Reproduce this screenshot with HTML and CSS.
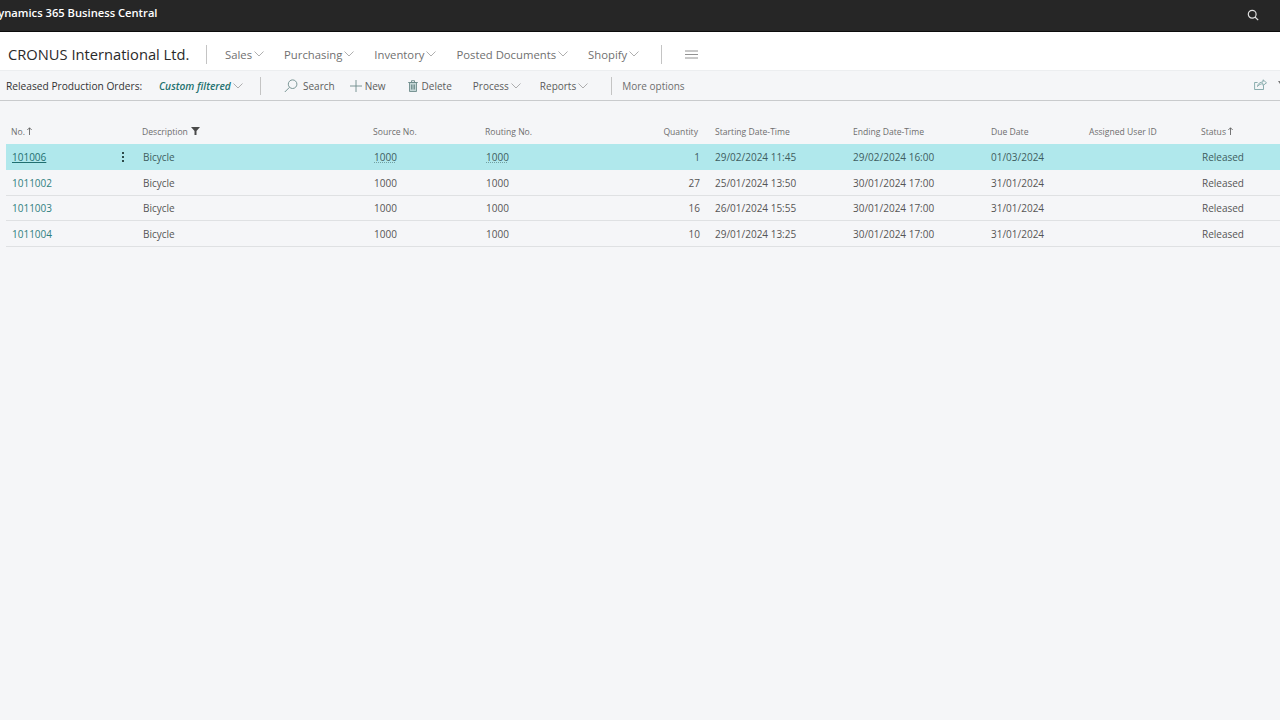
FILE: index.html
```html
<!DOCTYPE html>
<html lang="en">
<head>
<meta charset="utf-8">
<title>Released Production Orders</title>
<link rel="stylesheet" href="styles.css">
</head>
<body>
<header class="topbar">
  <span class="product">Dynamics 365 Business Central</span>
  <svg class="top-search" width="12" height="12" viewBox="0 0 12 12"><circle cx="5.2" cy="5.2" r="3.9"/><path d="M8 8l3.2 3.2"/></svg>
</header>
<nav class="navbar">
  <span class="company">CRONUS International Ltd.</span>
  <span class="sep nav-sep"></span>
  <div class="menu">
    <span class="menu-item">Sales<svg class="chev" viewBox="0 0 10 6"><path d="M.5.5L5 5 9.500.5"/></svg></span>
    <span class="menu-item">Purchasing<svg class="chev" viewBox="0 0 10 6"><path d="M.5.5L5 5 9.500.5"/></svg></span>
    <span class="menu-item">Inventory<svg class="chev" viewBox="0 0 10 6"><path d="M.5.5L5 5 9.500.5"/></svg></span>
    <span class="menu-item">Posted Documents<svg class="chev" viewBox="0 0 10 6"><path d="M.5.5L5 5 9.500.5"/></svg></span>
    <span class="menu-item">Shopify<svg class="chev" viewBox="0 0 10 6"><path d="M.5.5L5 5 9.500.5"/></svg></span>
  </div>
  <span class="sep nav-sep2"></span>
  <svg class="hamburger" width="13" height="9" viewBox="0 0 13 9"><path d="M0 1h13M0 4.500h13M0 8h13"/></svg>
</nav>
<div class="actionbar">
  <span class="page-name">Released Production Orders:</span>
  <span class="filter">Custom filtered<svg class="chev" viewBox="0 0 10 6"><path d="M.5.5L5 5 9.500.5"/></svg></span>
  <span class="sep act-sep"></span>
  <span class="act act-search"><svg class="ic" width="14" height="14" viewBox="0 0 14 14"><circle cx="8.600" cy="5.200" r="4.300"/><path d="M5.500 8.300L.8 13"/></svg>Search</span>
  <span class="act act-new"><svg class="ic ic-new" width="12" height="12" viewBox="0 0 12 12"><path d="M6 0v12M0 6h12"/></svg>New</span>
  <span class="act act-delete"><svg class="ic ic-del" width="10" height="12" viewBox="0 0 10 12"><path class="fill" d="M1.500 2.500h7v9h-7z"/><path d="M1.500 2.500h7v9h-7zM.2 2.500h9.600M3.500 2.500V.7h3v1.800M3.500 4.500v5M5 4.500v5M6.500 4.500v5"/></svg>Delete</span>
  <span class="act act-process">Process<svg class="chev" viewBox="0 0 10 6"><path d="M.5.5L5 5 9.500.5"/></svg></span>
  <span class="act act-reports">Reports<svg class="chev" viewBox="0 0 10 6"><path d="M.5.5L5 5 9.500.5"/></svg></span>
  <span class="sep act-sep2"></span>
  <span class="act more">More options</span>
  <svg class="share" width="13" height="11" viewBox="0 0 13 11"><path d="M9.500 6.500v4H.6V3.500h3M3.500 7.500C4 4.500 6 3 9 3V.8L12.500 3.800 9 6.500V4.700C7 4.700 5 5.500 3.500 7.500z"/></svg>
  <svg class="filter-pane" width="8" height="6" viewBox="0 0 8 6"><path d="M0 0h8L4 6z"/></svg>
</div>
<main class="list">
  <div class="row head">
    <div class="cell">No. <svg class="arrow" width="5" height="8" viewBox="0 0 5 8"><path d="M2.500 8V.8M.3 3L2.500.8 4.700 3"/></svg></div>
    <div class="cell">Description <svg class="funnel" width="9" height="8" viewBox="0 0 9 8"><path d="M0 0h9L5.500 4v4h-2V4z"/></svg></div>
    <div class="cell">Source No.</div>
    <div class="cell">Routing No.</div>
    <div class="cell num">Quantity</div>
    <div class="cell">Starting Date-Time</div>
    <div class="cell">Ending Date-Time</div>
    <div class="cell">Due Date</div>
    <div class="cell">Assigned User ID</div>
    <div class="cell">Status <svg class="arrow" width="5" height="8" viewBox="0 0 5 8"><path d="M2.500 8V.8M.3 3L2.500.8 4.700 3"/></svg></div>
  </div>
  <div class="row data selected">
    <div class="cell no"><a class="link current">101006</a><span class="dots"><i></i><i></i><i></i></span></div>
    <div class="cell">Bicycle</div>
    <div class="cell"><span class="lookup">1000</span></div>
    <div class="cell"><span class="lookup">1000</span></div>
    <div class="cell num">1</div>
    <div class="cell date">29/02/2024 11:45</div>
    <div class="cell date">29/02/2024 16:00</div>
    <div class="cell date">01/03/2024</div>
    <div class="cell"></div>
    <div class="cell">Released</div>
  </div>
  <div class="row data">
    <div class="cell no"><a class="link">1011002</a></div>
    <div class="cell">Bicycle</div>
    <div class="cell">1000</div>
    <div class="cell">1000</div>
    <div class="cell num">27</div>
    <div class="cell date">25/01/2024 13:50</div>
    <div class="cell date">30/01/2024 17:00</div>
    <div class="cell date">31/01/2024</div>
    <div class="cell"></div>
    <div class="cell">Released</div>
  </div>
  <div class="row data">
    <div class="cell no"><a class="link">1011003</a></div>
    <div class="cell">Bicycle</div>
    <div class="cell">1000</div>
    <div class="cell">1000</div>
    <div class="cell num">16</div>
    <div class="cell date">26/01/2024 15:55</div>
    <div class="cell date">30/01/2024 17:00</div>
    <div class="cell date">31/01/2024</div>
    <div class="cell"></div>
    <div class="cell">Released</div>
  </div>
  <div class="row data">
    <div class="cell no"><a class="link">1011004</a></div>
    <div class="cell">Bicycle</div>
    <div class="cell">1000</div>
    <div class="cell">1000</div>
    <div class="cell num">10</div>
    <div class="cell date">29/01/2024 13:25</div>
    <div class="cell date">30/01/2024 17:00</div>
    <div class="cell date">31/01/2024</div>
    <div class="cell"></div>
    <div class="cell">Released</div>
  </div>
</main>
</body>
</html>
```
FILE: styles.css
```css
* { box-sizing: border-box; }
html, body { margin: 0; height: 100%; }
body {
  width: 1280px;
  height: 720px;
  overflow: hidden;
  background: #f5f6f8;
  color: #555;
  font-family: "Open Sans", "Liberation Sans", sans-serif;
  font-size: 10px;
}
svg { fill: none; stroke: currentColor; flex: none; }

.topbar {
  height: 32px;
  background: #262626;
  border-bottom: 1px solid #0c0c0c;
  display: flex;
  align-items: center;
  justify-content: space-between;
  overflow: hidden;
  padding-right: 21px;
}
.product {
  margin-left: -10px;
  margin-top: -6px;
  color: #fff;
  font-size: 11.200px;
  font-weight: 600;
  white-space: nowrap;
}
.top-search { color: #e0e0e0; stroke-width: 1.200; margin-top: -2px; }

.navbar {
  height: 38px;
  background: #fff;
  display: flex;
  align-items: center;
  padding: 6px 0 0 8px;
}
.company { font-size: 14.700px; color: #2a2a2a; white-space: nowrap; width: 198px; }
.sep { width: 1px; height: 19px; background: #c4c4c4; flex: none; }
.menu { display: flex; margin-left: 18px; width: 436px; gap: 20px; }
.menu-item { font-size: 11.300px; color: #707070; display: flex; align-items: center; white-space: nowrap; }
.chev { width: 10px; height: 6px; margin-left: 2px; color: #9a9a9a; stroke-width: .8; }
.hamburger { color: #868686; margin-left: 23px; stroke-width: .9; }

.actionbar {
  height: 31px;
  border-top: 1px solid #eceef0;
  border-bottom: 1px solid #c9cbcd;
  display: flex;
  align-items: center;
  padding-left: 6px;
  position: relative;
  white-space: nowrap;
}
.page-name { color: #333; width: 153px; font-size: 10.200px; }
.filter { color: #23716f; font-size: 10.200px; font-style: italic; font-weight: 600; display: flex; align-items: center; width: 101px; }
.actionbar .sep { height: 18px; }
.act { display: flex; align-items: center; color: #5c5c5c; }
.ic { color: #6d8b8b; stroke-width: .9; margin-right: 5px; }
.ic-new { margin-right: 3px; }
.ic-del { margin-right: 4px; }
.ic .fill { fill: #c4d6d6; stroke: none; }
.act-search { margin-left: 23px; }
.act-new { margin-left: 15px; }
.act-delete { margin-left: 22px; }
.act-process { margin-left: 21px; }
.act-reports { margin-left: 19px; }
.act-sep2 { margin-left: 23px; }
.more { margin-left: 10px; color: #6e6e6e; }
.share { position: absolute; left: 1254px; top: 8px; color: #6f9a9a; stroke-width: .8; }
.filter-pane { position: absolute; left: 1278px; top: 10px; fill: #777; stroke: none; }

.list { padding: 20px 0 0 6px; width: 1290px; }
.row {
  display: grid;
  grid-template-columns: 131px 231px 112px 112px 118px 138px 138px 98px 112px 90px;
  align-items: center;
}
.cell { padding-left: 6px; white-space: nowrap; }
.cell.date { padding-left: 5px; }
.num { text-align: right; padding: 0 10px 0 0; }
.head { height: 23px; padding-bottom: 2px; font-size: 8.600px; color: #6e6e6e; }
.head .cell { padding-left: 5px; }
.head .num { padding: 0 12px 0 0; }
.arrow { stroke-width: .8; color: #555; }
.funnel { fill: #4a4a4a; stroke: none; margin-left: 1px; }
.data { height: 25.500px; padding-top: 1px; border-bottom: 1px solid #dfe1e3; }
.selected { height: 26px; padding-top: 0; background: #b0e8ec; border-bottom: 0; color: #3e5d60; }
.no { display: flex; align-items: center; justify-content: space-between; padding-right: 13px; }
.link { color: #2f8080; }
.current { color: #1f6f70; text-decoration: underline; }
.dots { display: flex; flex-direction: column; gap: 2px; }
.dots i { width: 2px; height: 2px; background: #2d4a4a; display: block; }
.lookup { text-decoration: underline dotted rgba(50, 90, 90, .5); }
```
